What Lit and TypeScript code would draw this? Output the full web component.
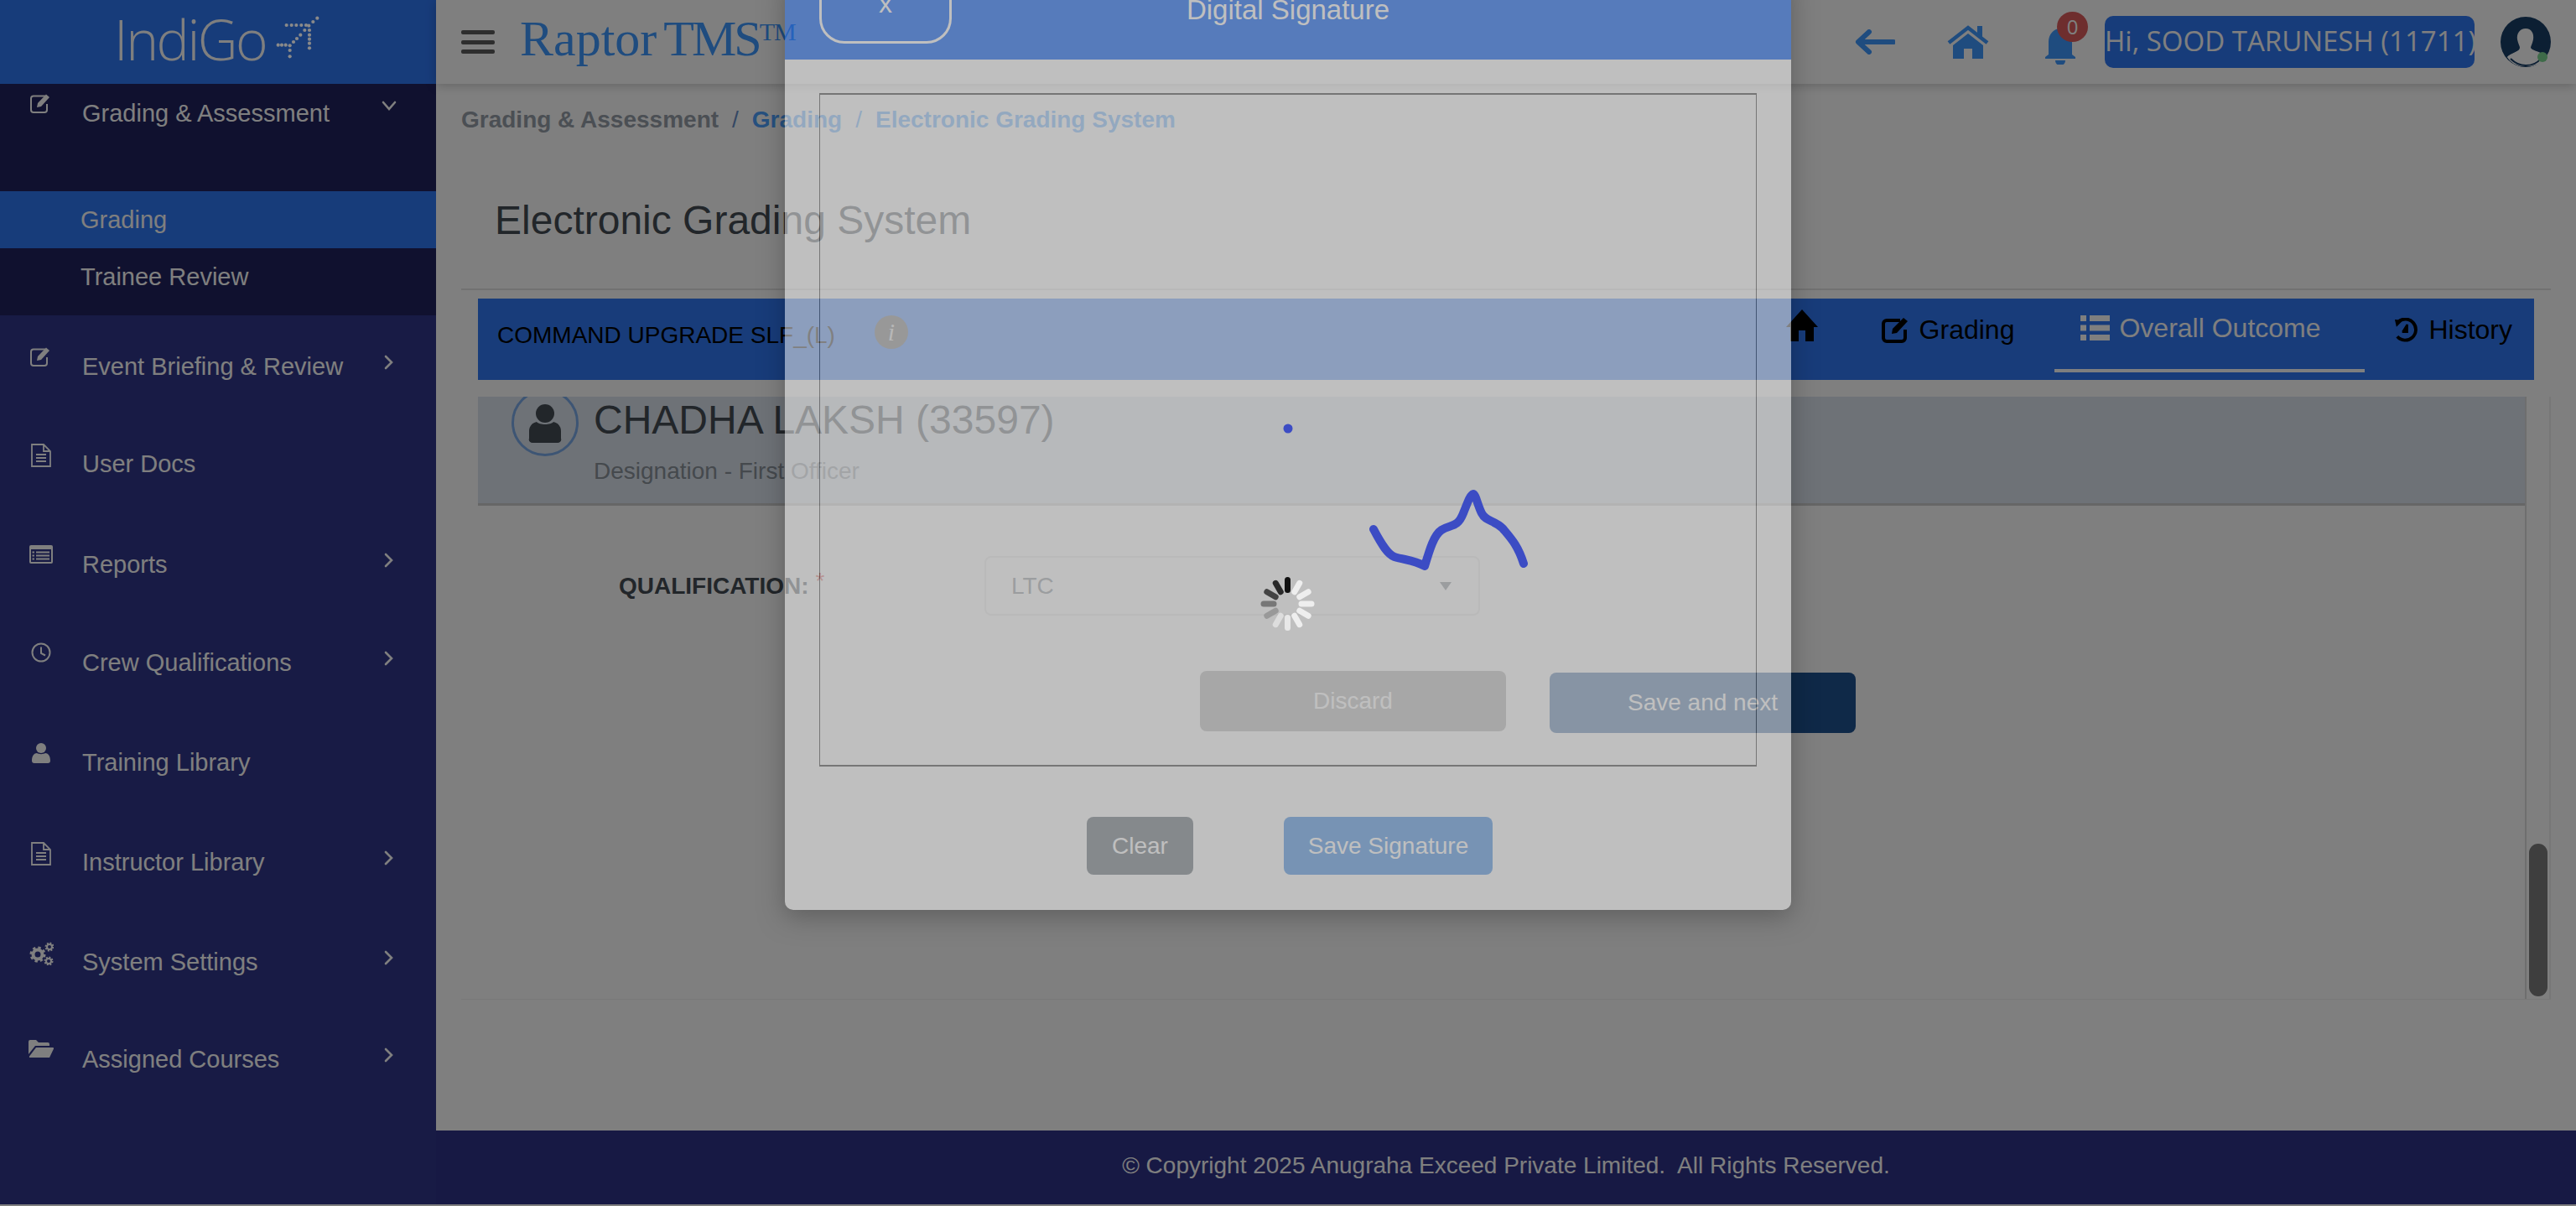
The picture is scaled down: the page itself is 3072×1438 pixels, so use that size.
import { LitElement, html, css, svg } from "lit";
import { customElement } from "lit/decorators.js";

const editIcon = html`<svg viewBox="0 0 28 24" width="28" height="24"><path d="M19 3.5H5a3 3 0 0 0-3 3V20a3 3 0 0 0 3 3h13a3 3 0 0 0 3-3v-7" fill="none" stroke="currentColor" stroke-width="2"/><path d="M9 17l1-5L20 1.5l4 3.5L14 16z" fill="currentColor"/></svg>`;
const docIcon = html`<svg viewBox="0 0 24 28" width="24" height="28"><path d="M1 1h14l8 8v18H1z M15 1v8h8" fill="none" stroke="currentColor" stroke-width="1.8"/><path d="M6 13h12M6 17h12M6 21h12" stroke="currentColor" stroke-width="1.8"/></svg>`;
const listIcon = html`<svg viewBox="0 0 28 24" width="28" height="24"><rect x="0" y="1" width="28" height="22" rx="2" fill="currentColor"/><rect x="2" y="6" width="24" height="15" fill="#31378a"/><path d="M8 9.5h16M8 13.5h16M8 17.5h16M3.5 9.5h2.5M3.5 13.5h2.5M3.5 17.5h2.5" stroke="currentColor" stroke-width="1.8"/></svg>`;
const clockIcon = html`<svg viewBox="0 0 24 24" width="24" height="24"><circle cx="12" cy="12" r="10.5" fill="none" stroke="currentColor" stroke-width="2"/><path d="M12 5.5V13l5 2.5" fill="none" stroke="currentColor" stroke-width="2"/></svg>`;
const userIcon = html`<svg viewBox="0 0 24 26" width="24" height="26"><circle cx="12" cy="7" r="6" fill="currentColor"/><path d="M1 22c0-6 3-9 6-9 2 1.5 8 1.500 10 0 3 0 6 3 6 9 0 2-1 3-3 3H4c-2 0-3-1-3-3z" fill="currentColor"/></svg>`;
const cogsIcon = html`<svg viewBox="0 0 30 28" width="30" height="28"><circle cx="11" cy="15" r="5.500" fill="none" stroke="currentColor" stroke-width="4"/><circle cx="11" cy="15" r="8" fill="none" stroke="currentColor" stroke-width="3" stroke-dasharray="3.300 3"/><circle cx="25" cy="6" r="3" fill="none" stroke="currentColor" stroke-width="2"/><circle cx="25" cy="6" r="4.500" fill="none" stroke="currentColor" stroke-width="2" stroke-dasharray="2 1.500"/><circle cx="24" cy="23" r="3" fill="none" stroke="currentColor" stroke-width="2"/><circle cx="24" cy="23" r="4.500" fill="none" stroke="currentColor" stroke-width="2" stroke-dasharray="2 1.500"/></svg>`;
const folderIcon = html`<svg viewBox="0 0 30 24" width="30" height="24"><path d="M0 3q0-2 2-2h7l3 3h11q2 0 2 2v2H8L0 18z" fill="currentColor"/><path d="M9 10h20q1.500 0 1 1.500L25 22H2q-1.500 0-1-1.500z" fill="currentColor"/></svg>`;
const chevRight = html`<svg viewBox="0 0 12 18" width="12" height="18"><path d="M2 2l7 7-7 7" fill="none" stroke="currentColor" stroke-width="2.600" stroke-linecap="round"/></svg>`;
const chevDown = html`<svg viewBox="0 0 18 12" width="18" height="12"><path d="M2 2l7 8 7-8" fill="none" stroke="currentColor" stroke-width="2.600" stroke-linecap="round"/></svg>`;

const NAV = [
  { label: "Event Briefing & Review", icon: editIcon, chev: true, gap: 3 },
  { label: "User Docs", icon: docIcon, chev: false, gap: 0 },
  { label: "Reports", icon: listIcon, chev: true, gap: 4 },
  { label: "Crew Qualifications", icon: clockIcon, chev: true, gap: 1 },
  { label: "Training Library", icon: userIcon, chev: false, gap: 3 },
  { label: "Instructor Library", icon: docIcon, chev: true, gap: 3 },
  { label: "System Settings", icon: cogsIcon, chev: true, gap: 3 },
  { label: "Assigned Courses", icon: folderIcon, chev: true, gap: 0 },
];

const LOGO_DOTS: [number, number][] = [
  [745, 35], [730, 48], [715, 62], [700, 78], [685, 95], [672, 108], [660, 120], [647, 133], [632, 131], [618, 131], [605, 131],
  [635, 60], [653, 60], [670, 60], [688, 60], [705, 60],
  [717, 78], [717, 95], [717, 110], [717, 125], [717, 142], [647, 150], [647, 172],
];

const SPIN = ["#111", "#eee", "#eee", "#eee", "#eee", "#eee", "#e8e8e8", "#ddd", "#999", "#777", "#444", "#2a2a2a"];

@customElement("app-root")
export class AppRoot extends LitElement {
  static styles = css`
    :host { display: block; position: relative; width: 3072px; height: 1438px; overflow: hidden; background: #fff;
      font-family: "Liberation Sans", Arial, sans-serif; color: #454d55; }
    .app { display: flex; height: 1436px; }
    aside { width: 520px; flex: none; background: #31378a; color: #fff; display: flex; flex-direction: column; }
    .logo { height: 100px; background: #2f78f5; display: flex; align-items: flex-start; }
    .logo-text { margin: 4px 0 0 136px; font: 300 66px/84px "Open Sans", sans-serif; letter-spacing: -2.500px; width: 190px; white-space: nowrap; }
    .logo svg { display: block; margin: 10px 0 0 4px; }
    .group { height: 276px; background: #20225e; display: flex; flex-direction: column; }
    .group-head { height: 128px; display: flex; align-items: center; padding: 0 47px 2px 34px; font-size: 29px; box-sizing: border-box; }
    .row { display: flex; align-items: center; height: 116px; padding: 0 50px 0 34px; font-size: 29px; }
    .group-head { padding-bottom: 58px; height: 128px; padding-right: 47px; }
    .ic { width: 30px; height: 30px; display: flex; justify-content: center; margin-bottom: 18px; margin-right: 34px; flex: none; }
    .chev { margin-left: auto; margin-bottom: 10px; display: flex; }
    .sub { height: 68px; display: flex; align-items: center; padding-left: 96px; font-size: 29px; }
    .sub.active { background: #2f78f5; }
    .rows { display: flex; flex-direction: column; }

    main { flex: 1; min-width: 0; display: flex; flex-direction: column; }
    .top { height: 100px; flex: none; display: flex; align-items: center; padding-left: 30px; background: #fff; box-shadow: 0 2px 12px rgba(0,0,0,.22); position: relative; }
    .burger { width: 40px; height: 28px; display: flex; flex-direction: column; justify-content: space-between; }
    .burger i { display: block; height: 5px; border-radius: 2px; background: #5c5c5c; }
    .brand { margin-left: 30px; font: 60px/1 "Liberation Serif", serif; color: #3e98ff; word-spacing: -7px; white-space: nowrap; margin-top: -8px; }
    .brand .tms { letter-spacing: -3px; }
    .brand sup { font-size: 30px; line-height: 0; vertical-align: 18px; letter-spacing: -1px; }
    .top-right { margin-left: auto; display: flex; align-items: center; padding-right: 30px; color: #3e98ff; }
    .back { margin-right: 62px; display: flex; }
    .home { margin-right: 66px; display: flex; }
    .bell { width: 72px; height: 100px; position: relative; display: flex; align-items: center; }
    .badge { position: absolute; left: 15px; top: 14px; width: 37px; height: 36px; border-radius: 50%; background: #dc5c5c; color: #fff;
      font: 24px/36px "Open Sans", sans-serif; text-align: center; }
    .pill { width: 441px; height: 62px; border-radius: 10px; background: #2f78f5; color: #fff; font: 33px/60px "Open Sans", sans-serif; text-align: center; white-space: nowrap; margin-right: 31px; }
    .avatar { width: 60px; height: 60px; display: flex; }

    .content { flex: 1; min-height: 0; padding: 0 30px; display: flex; flex-direction: column; }
    .crumbs { height: 86px; flex: none; display: flex; align-items: center; font-weight: 700; font-size: 28px; color: #969ea8; white-space: nowrap; }
    .crumbs .sep { margin: 0 16px; color: #4ea2ff; font-weight: 400; }
    .crumbs .sep.first { color: #6a90c8; }
    .crumbs .link { color: #4ea2ff; }
    .title { height: 158px; flex: none; display: flex; align-items: center; padding: 0 0 6px 40px; box-sizing: border-box; font-size: 48px; font-weight: 400; margin: 0; color: #454d55; }
    .card { height: 848px; flex: none; box-sizing: border-box; border-top: 2px solid #e2e2e2; border-bottom: 1px solid #f0f0f0; padding-top: 10px; display: flex; flex-direction: column; }
    .tabs { height: 97px; flex: none; width: 2452px; margin-left: 20px; background: #3078f4; display: flex; color: #000; padding-right: 26px; box-sizing: border-box; }
    .course { display: flex; align-items: center; padding: 0 0 9px 23px; font-size: 28px; white-space: nowrap; }
    .info { width: 40px; height: 40px; border-radius: 50%; background: #626262; color: #ddd; font: italic 30px/40px "Liberation Serif", serif; text-align: center; margin: 0 0 8px 47px; flex: none; }
    .tab { display: flex; align-items: center; gap: 11px; font-size: 32px; height: 84px; padding-bottom: 10px; box-sizing: border-box; white-space: nowrap; }
    .tab.t-home { margin-left: auto; margin-right: 76px; }
    .tab.t-grade { margin-right: 48px; }
    .tab.t-over { width: 370px; height: 88px; padding: 0 0 14px 31px; margin-right: 35px; color: #fff; border-bottom: 4px solid #fff; }
    .scroller { flex: 1; min-height: 0; margin: 20px 0 0 20px; display: flex; }
    .scroll-body { flex: 1; min-width: 0; overflow: hidden; }
    .track { width: 31px; flex: none; box-sizing: border-box; border-left: 2px solid #dcdcdc; border-right: 2px solid #eee; padding: 533px 2px 0 3px; }
    .thumb { height: 182px; border-radius: 11px; background: #7c7c7c; }
    .person { height: 130px; box-sizing: border-box; background: #dce4ee; border-bottom: 3px solid #ccc; display: flex; padding-left: 40px; overflow: hidden; }
    .pic { width: 80px; height: 80px; flex: none; margin: -9px 18px 0 0; }
    .name { font-size: 48px; line-height: 56px; white-space: nowrap; }
    .desig { font-size: 28px; line-height: 40px; margin-top: 13px; color: #8a929b; }
    .form { padding: 60px 0 0 168px; display: flex; }
    .label { width: 436px; display: flex; align-items: center; font-size: 28px; font-weight: 700; color: #454d55; flex: none; white-space: nowrap; }
    .req { color: #d9534f; font-weight: 400; margin: -12px 0 0 8px; }
    .select { width: 591px; height: 71px; box-sizing: border-box; border: 2px solid #e4e4e4; border-radius: 8px; display: flex; align-items: center; padding: 0 32px 0 30px; font-size: 28px; color: #6c757d; background: #fff; }
    .select i { margin-left: auto; width: 0; height: 0; border-left: 7px solid transparent; border-right: 7px solid transparent; border-top: 10px solid #6c757d; }
    .actions { display: flex; margin: 66px 0 0 861px; gap: 52px; align-items: flex-start; }
    .btn { border: 0; display: flex; align-items: center; justify-content: center; font: 28px "Liberation Sans", Arial, sans-serif; color: #fff; box-sizing: border-box; border-radius: 8px; }
    .discard { width: 365px; height: 72px; background: #9e9e9e; }
    .next { width: 365px; height: 72px; margin-top: 2px; background: #1e5290; }
    footer { height: 88px; flex: none; background: #2e3288; color: #fff; font-size: 28px; display: flex; align-items: center; justify-content: center; white-space: pre; padding-bottom: 4px; box-sizing: border-box; }

    .backdrop { position: absolute; inset: 0; background: rgba(0,0,0,.5); }
    .modal { position: absolute; left: 936px; top: -30px; width: 1200px; height: 1115px; background: #fff; opacity: .5; border-radius: 10px; box-shadow: 0 8px 30px rgba(0,0,0,.5); display: flex; flex-direction: column; }
    .m-head { height: 101px; flex: none; background: #2e78f8; color: #fff; display: grid; grid-template-columns: 1fr auto 1fr; }
    .close { width: 158px; height: 82px; margin-left: 41px; box-sizing: border-box; border: 3px solid #fff; border-radius: 0 0 30px 30px / 0 0 30px 30px; display: flex; align-items: flex-end; justify-content: center; font-size: 32px; line-height: 62px; font-weight: 400; padding-bottom: 14px; }
    .m-title { font-size: 33px; line-height: 84px; white-space: nowrap; }
    .canvas { height: 803px; margin: 40px 41px 0; box-sizing: border-box; border: 1px solid #6e6e6e; border-top-width: 2px; border-bottom-width: 2px; flex: none; }
    .m-foot { display: flex; gap: 108px; margin: 60px 0 0 360px; }
    .clear { width: 127px; height: 69px; background: #8c949a; }
    .savesig { width: 249px; height: 69px; background: #70a8ea; }
    .sig { position: absolute; left: 0; top: 0; width: 3072px; height: 1438px; pointer-events: none; }
  `;

  render() {
    return html`
      <div class="app">
        <aside>
          <div class="logo">
            <div class="logo-text">IndiGo</div>
            <svg viewBox="130 10 60 70" width="60" height="70" style="margin-left:4px;margin-top:0">
            </svg>
          </div>
          <div class="group">
            <div class="group-head"><span class="ic">${editIcon}</span><span>Grading &amp; Assessment</span><span class="chev" style="margin-bottom:18px">${chevDown}</span></div>
            <div class="sub active">Grading</div>
            <div class="sub">Trainee Review</div>
          </div>
          <div class="rows">
            ${NAV.map(n => html`<div class="row" style="margin-top:${n.gap}px"><span class="ic">${n.icon}</span><span>${n.label}</span>${n.chev ? html`<span class="chev">${chevRight}</span>` : null}</div>`)}
          </div>
        </aside>
        <main>
          <div class="top">
            <div class="burger"><i></i><i></i><i></i></div>
            <div class="brand">Raptor <span class="tms">TMS</span><sup>TM</sup></div>
            <div class="top-right">
              <span class="back"><svg viewBox="0 0 48 30" width="48" height="30"><path d="M46 15H6M17 3L4 15l13 12" fill="none" stroke="currentColor" stroke-width="6" stroke-linecap="round" stroke-linejoin="round"/></svg></span>
              <span class="home"><svg viewBox="0 0 50 40" width="50" height="40"><path d="M2 21L25 3l23 18" fill="none" stroke="currentColor" stroke-width="4.500"/><path d="M36 1h6v14l-6-5z" fill="currentColor"/><path d="M7 24L25 10l18 14v16H30V28H20v12H7z" fill="currentColor"/></svg></span>
              <span class="bell"><svg viewBox="0 0 38 44" width="38" height="44" style="margin-top:10px"><path d="M5 32V17C5 8 11 1 19 1s14 7 14 17v14l4 3v2H1v-2z" fill="currentColor"/><path d="M13 39h12c0 4-3 6-6 6s-6-2-6-6z" fill="currentColor"/></svg><span class="badge">0</span></span>
              <div class="pill">Hi, SOOD TARUNESH (11711)</div>
              <span class="avatar"><svg viewBox="0 0 60 60" width="60" height="60"><circle cx="30" cy="30" r="30" fill="#183e66"/><path d="M30 14c7 0 10 6 9 13-1 5-3 8-3 10 1 3 10 4 15 8 3 2 2 6-1 8-5 4-12 6-20 6S13 56 8 48c5-5 16-7 15-11 0-2-2-5-3-10-1-7 3-13 10-13z" fill="#fff"/><path d="M8 48c4-5 15-6 15-11 3 3 10 3 13 0 0 5 15 6 18 11-5 8-14 11-24 11S13 56 8 48z" fill="#fff"/><path d="M12 50c5 5 11 8 18 8s14-3 18-8" fill="none" stroke="#183e66" stroke-width="2"/><circle cx="50" cy="48" r="6" fill="#7cd692"/></svg></span>
            </div>
          </div>
          <div class="content">
            <div class="crumbs"><span>Grading &amp; Assessment</span><span class="sep first">/</span><span class="link">Grading</span><span class="sep">/</span><span class="link">Electronic Grading System</span></div>
            <h1 class="title">Electronic Grading System</h1>
            <div class="card">
              <div class="tabs">
                <div class="course"><span>COMMAND UPGRADE SLF_(L)</span><span class="info">i</span></div>
                <div class="tab t-home"><svg viewBox="0 0 38 38" width="38" height="38" style="margin-top:-10px"><path d="M19 0l19 21h-5v17H23V25h-8v13H5V21H0z" fill="currentColor"/></svg></div>
                <div class="tab t-grade"><svg viewBox="0 0 34 32" width="34" height="32"><path d="M22 5H6a4 4 0 0 0-4 4v17a4 4 0 0 0 4 4h18a4 4 0 0 0 4-4V16" fill="none" stroke="currentColor" stroke-width="4"/><path d="M12 21l1-6L26 2l5 4-13 14z" fill="currentColor"/></svg><span>Grading</span></div>
                <div class="tab t-over"><svg viewBox="0 0 35 30" width="35" height="30"><path d="M0 0h7v7H0zM11 0h24v7H11zM0 11.500h7v7H0zM11 11.500h24v7H11zM0 23h7v7H0zM11 23h24v7H11z" fill="currentColor"/></svg><span>Overall Outcome</span></div>
                <div class="tab" style="gap:12px"><svg viewBox="0 0 30 30" width="29" height="29"><path d="M5 5a13 13 0 1 1-1 18" fill="none" stroke="currentColor" stroke-width="4"/><path d="M1 2l10 1-8 8zM15 8v8l-5 0" fill="currentColor"/><path d="M16 8v9h-6" fill="none" stroke="currentColor" stroke-width="3"/></svg><span>History</span></div>
              </div>
              <div class="scroller">
                <div class="scroll-body">
                  <div class="person">
                    <div class="pic"><svg viewBox="0 0 80 80" width="80" height="80"><circle cx="40" cy="40" r="38.500" fill="none" stroke="#7baae8" stroke-width="3"/><circle cx="40" cy="29" r="11" fill="#454d55"/><path d="M21 59c-1 2 1 5 4 5h30c3 0 5-3 4-5V50c0-6-4-10-9-11-3 4-17 4-20 0-5 1-9 5-9 11z" fill="#454d55"/></svg></div>
                    <div>
                      <div class="name">CHADHA LAKSH (33597)</div>
                      <div class="desig">Designation - First Officer</div>
                    </div>
                  </div>
                  <div class="form">
                    <div class="label">QUALIFICATION:<span class="req">*</span></div>
                    <div class="select"><span>LTC</span><i></i></div>
                  </div>
                  <div class="actions">
                    <div class="btn discard">Discard</div>
                    <div class="btn next">Save and next</div>
                  </div>
                </div>
                <div class="track"><div class="thumb"></div></div>
              </div>
            </div>
          </div>
          <footer>© Copyright 2025 Anugraha Exceed Private Limited.  All Rights Reserved.</footer>
        </main>
      </div>
      <div class="backdrop"></div>
      <div class="modal">
        <div class="m-head">
          <div><div class="close">x</div></div>
          <div class="m-title">Digital Signature</div>
          <div></div>
        </div>
        <div class="canvas"></div>
        <div class="m-foot">
          <div class="btn clear">Clear</div>
          <div class="btn savesig">Save Signature</div>
        </div>
      </div>
      <svg class="sig" viewBox="0 0 3072 1438">
        <g fill="#9b9b9b">
          ${LOGO_DOTS.map(([x, y]) => svg`<circle cx="${130 + x / 3}" cy="${10 + y / 3}" r="2.100" fill="#8a8a8a"/>`)}
        </g>
        <circle cx="1536" cy="511" r="5.500" fill="#3c4cc4"/>
        <path d="M1638 631C1648 650 1655 661 1663 664C1675 668 1685 667 1699 675C1705 655 1710 638 1719 632C1730 625 1738 630 1745 612C1750 600 1753 590 1757 589C1760 590 1762 602 1767 612C1772 622 1782 620 1792 630C1802 642 1810 650 1817 672" fill="none" stroke="#3c4cc4" stroke-width="10" stroke-linecap="round" stroke-linejoin="round"/>
        ${SPIN.map((c, i) => svg`<rect x="1532" y="688" width="7" height="19" rx="3.500" fill="${c}" transform="rotate(${i * 30} 1535.500 720)"/>`)}
      </svg>
    `;
  }
}
